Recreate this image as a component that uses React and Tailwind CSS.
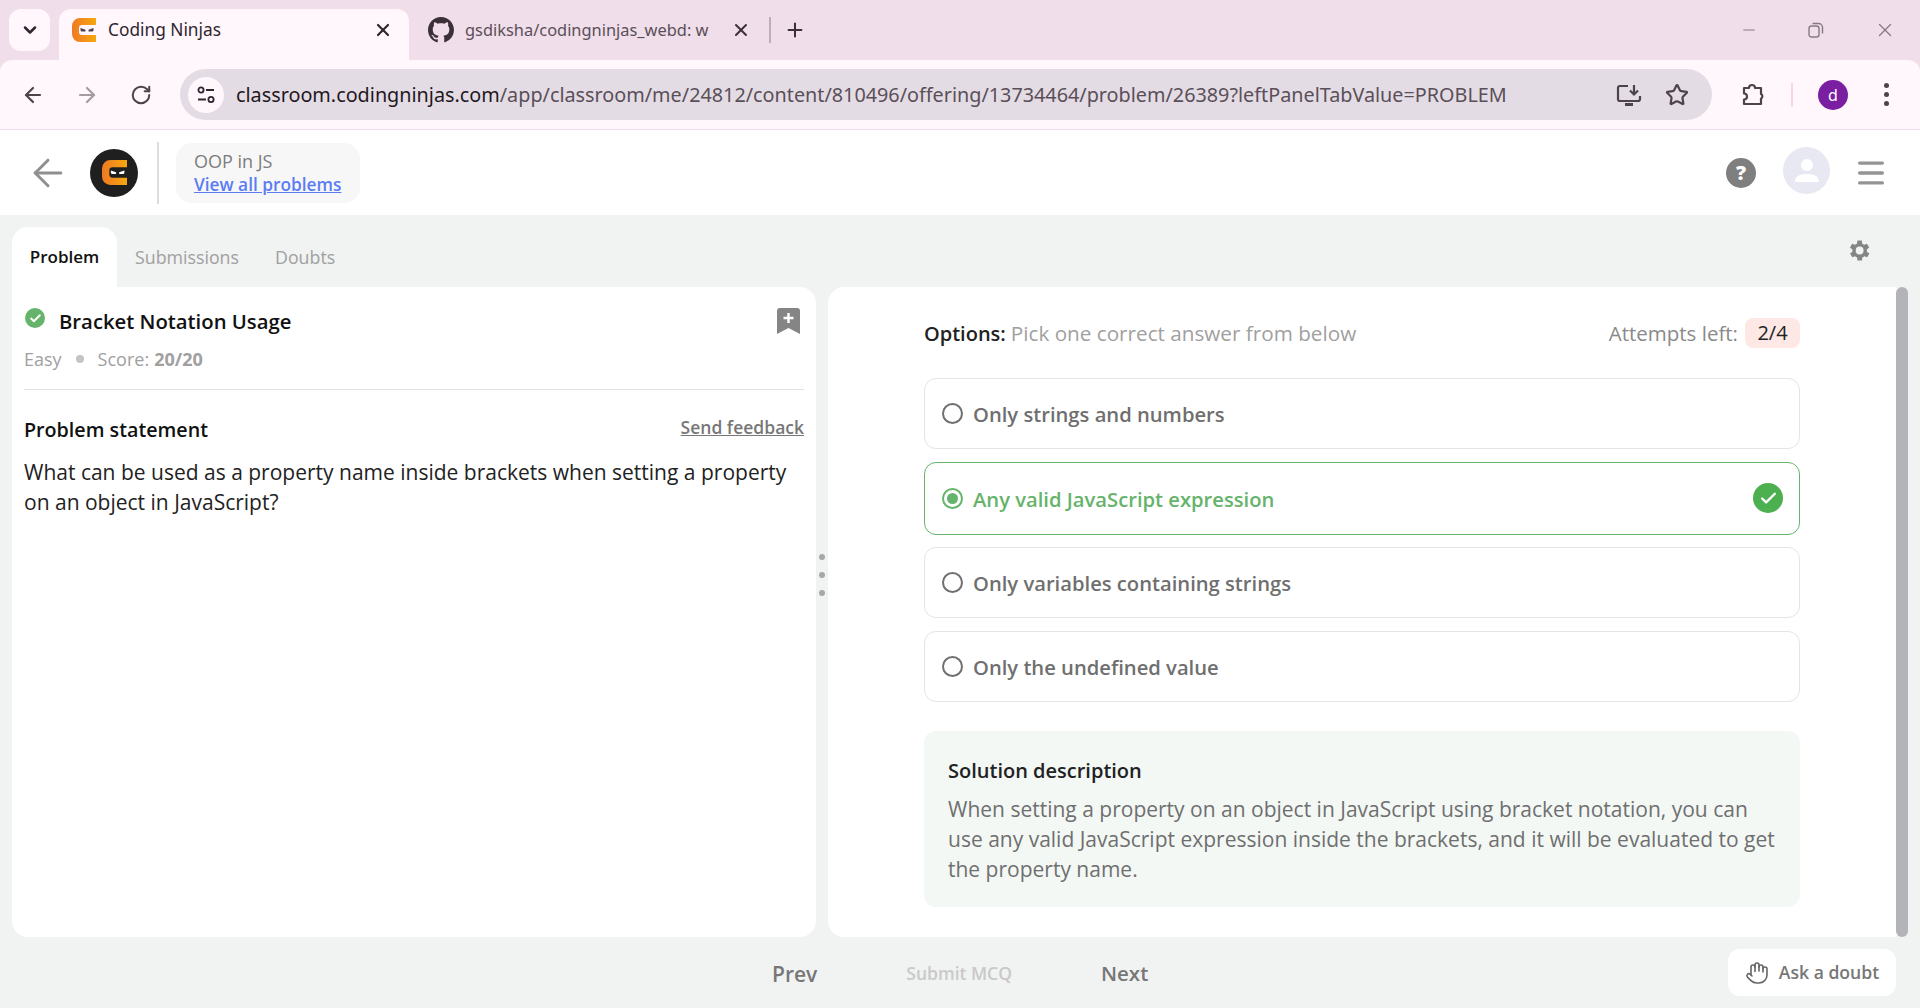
import React from 'react';
import { ArrowLeft, ArrowRight, RotateCw, ChevronDown, X, Plus, Minus, Star, Menu, Check, Hand } from 'lucide-react';

const bodyFont = 'font-["Open_Sans",sans-serif]';
const chromeFont = 'font-["Noto_Sans",sans-serif]';

// Orange "C" with the little ninja eyes, used for favicon and header logo
function NinjaMark({ size = 24, eyes = '#fff' }) {
  return (
    <svg width={size} height={size} viewBox="0 0 24 24">
      <defs>
        <linearGradient id="cnGrad" x1="0" x2="1" y1="0" y2="0">
          <stop offset="0" stopColor="#ee7a25" />
          <stop offset="1" stopColor="#f7a70e" />
        </linearGradient>
      </defs>
      <path d="M8 0h16v7H10a3 3 0 0 0-3 3v4a3 3 0 0 0 3 3h14v7H8a8 8 0 0 1-8-8V8a8 8 0 0 1 8-8z" fill="url(#cnGrad)" />
      <path d="M8.5 10l5 1.8v1.6H10a1.5 1.5 0 0 1-1.5-1.5zM21.5 10l-5 1.8v1.6H20a1.5 1.5 0 0 0 1.5-1.5z" fill={eyes} />
    </svg>
  );
}

function GithubMark() {
  return (
    <svg width="26" height="26" viewBox="0 0 16 16" fill="#3b3038">
      <path d="M8 0C3.58 0 0 3.58 0 8c0 3.54 2.29 6.53 5.47 7.59.4.07.55-.17.55-.38 0-.19-.01-.82-.01-1.49-2.01.37-2.53-.49-2.69-.94-.09-.23-.48-.94-.82-1.13-.28-.15-.68-.52-.01-.53.63-.01 1.08.58 1.23.82.72 1.21 1.87.87 2.33.66.07-.52.28-.87.51-1.07-1.78-.2-3.64-.89-3.64-3.95 0-.87.31-1.59.82-2.15-.08-.2-.36-1.02.08-2.12 0 0 .67-.21 2.2.82.64-.18 1.32-.27 2-.27s1.36.09 2 .27c1.53-1.04 2.2-.82 2.2-.82.44 1.1.16 1.92.08 2.12.51.56.82 1.27.82 2.15 0 3.07-1.87 3.75-3.65 3.95.29.25.54.73.54 1.48 0 1.07-.01 1.93-.01 2.2 0 .21.15.46.55.38A8.01 8.01 0 0 0 16 8c0-4.42-3.58-8-8-8z" />
    </svg>
  );
}

function BrowserTabs() {
  return (
    <div className={`flex h-[60px] ${chromeFont}`}>
      <div className="ml-[9px] mt-[9px] flex h-[42px] w-[41px] items-center justify-center rounded-xl bg-[#fff7fb]">
        <ChevronDown size={20} strokeWidth={3} className="text-[#2f2530]" />
      </div>
      <div className="ml-[9px] mt-[9px] flex h-[51px] w-[350px] items-center rounded-t-xl bg-[#fff7fb] pb-[9px] pl-[13px] pr-[16px]">
        <NinjaMark size={24} eyes="#4e434c" />
        <span className="ml-[12px] flex-1 text-[17.300px] text-[#2f2530]">Coding Ninjas</span>
        <X size={20} strokeWidth={2.6} className="text-[#2f2530]" />
      </div>
      <div className="mt-[9px] flex h-[42px] w-[372px] items-center pl-[19px]">
        <GithubMark />
        <span className="ml-[11px] w-[250px] overflow-hidden whitespace-nowrap text-[16.400px] text-[#5a4f58]">gsdiksha/codingninjas_webd: w</span>
        <X size={20} strokeWidth={2.4} className="ml-[16px] text-[#3b3038]" />
        <div className="ml-[18px] h-[26px] w-[2px] bg-[#bdafb9]" />
      </div>
      <div className="mt-[9px] flex h-[42px] items-center pl-[3px]">
        <Plus size={22} strokeWidth={2.2} className="text-[#3b3038]" />
      </div>
      <div className="mt-[9px] ml-auto flex h-[42px] items-center gap-[50px] pr-[24px] text-[#857a82]">
        <Minus size={18} strokeWidth={1.6} />
        <svg width="16" height="16" viewBox="0 0 16 16" fill="none" stroke="currentColor" strokeWidth="1.4">
          <rect x="1" y="4" width="10" height="11" rx="2.5" />
          <path d="M4.5 1.5h6A4 4 0 0 1 14.5 5.5v6" />
        </svg>
        <X size={22} strokeWidth={1.4} />
      </div>
    </div>
  );
}

function BrowserToolbar() {
  return (
    <div className="flex h-[70px] items-center rounded-t-xl border-b border-[#f0deea] bg-[#fff7fb] pl-[21px] pr-[16px]">
      <ArrowLeft size={24} strokeWidth={2.2} className="text-[#4e434c]" />
      <ArrowRight size={24} strokeWidth={2.2} className="ml-[30px] text-[#a59ba3]" />
      <RotateCw size={22} strokeWidth={2.2} className="ml-[31px] text-[#4e434c]" />
      <div className={`ml-[28px] flex h-[51px] w-[1532px] items-center rounded-full bg-[#e4dce4] pl-[8px] pr-[23px] ${chromeFont}`}>
        <div className="flex h-[36px] w-[36px] items-center justify-center rounded-full bg-[#fff7fb]">
          <svg width="20" height="20" viewBox="0 0 20 20" fill="none" stroke="#2f2530" strokeWidth="1.8">
            <circle cx="5" cy="5" r="2.6" />
            <path d="M10 5h8M2 14.5h8" />
            <circle cx="15" cy="14.5" r="2.6" />
          </svg>
        </div>
        <div className="ml-[12px] flex-1 whitespace-nowrap text-[19.800px] text-[#5a4f58]">
          <span className="text-[#1f1820]">classroom.codingninjas.com</span>/app/classroom/me/24812/content/810496/offering/13734464/problem/26389?leftPanelTabValue=PROBLEM
        </div>
        <svg width="26" height="24" viewBox="0 0 26 24" fill="none" stroke="#4e434c" strokeWidth="2.2">
          <path d="M12 3H4a2 2 0 0 0-2 2v11a2 2 0 0 0 2 2h18a2 2 0 0 0 2-2v-3" />
          <path d="M18 2v9M14 7.5l4 4 4-4" />
          <path d="M9 21.5h8" strokeWidth="3" />
        </svg>
        <Star size={24} strokeWidth={2.2} className="ml-[23px] text-[#4e434c]" />
      </div>
      <svg className="ml-[29px]" width="24" height="24" viewBox="0 0 24 24" fill="none" stroke="#4e434c" strokeWidth="2.2">
        <path d="M3 5h5a3 3 0 0 1 6 0h6v6a2.6 2.6 0 0 1 0 4.6V21H3v-4.5a3 3 0 0 0 0-6z" strokeLinejoin="round" />
      </svg>
      <div className="ml-[26px] h-[24px] w-[2px] bg-[#f8d3ee]" />
      <div className={`ml-[25px] flex h-[30px] w-[30px] items-center justify-center rounded-full bg-[#7b1fa2] text-[16px] text-white ${chromeFont}`}>d</div>
      <div className="ml-[36px] flex flex-col gap-[4px]">
        <span className="h-[5px] w-[5px] rounded-full bg-[#4e434c]" />
        <span className="h-[5px] w-[5px] rounded-full bg-[#4e434c]" />
        <span className="h-[5px] w-[5px] rounded-full bg-[#4e434c]" />
      </div>
    </div>
  );
}

function AppHeader() {
  return (
    <header className="flex h-[85px] items-center bg-white pl-[26px] pr-[32px]">
      <ArrowLeft size={44} strokeWidth={1.6} className="text-[#8f8f8f]" />
      <div className="ml-[20px] flex h-[48px] w-[48px] items-center justify-center rounded-full bg-[#1f1f1f]">
        <NinjaMark size={25} />
      </div>
      <div className="ml-[19px] h-[62px] w-[2px] bg-[#dddddd]" />
      <div className="ml-[17px] flex h-[60px] w-[184px] flex-col justify-center rounded-2xl bg-[#f7f7f7] pl-[18px]">
        <div className="text-[18px] leading-[24px] text-[#7c7c7c]">OOP in JS</div>
        <a className="text-[17.300px] font-semibold leading-[24px] text-[#5b7cf5] underline">View all problems</a>
      </div>
      <div className="ml-auto flex h-[30px] w-[30px] items-center justify-center rounded-full bg-[#7f7f7f] text-[20px] font-extrabold text-white">?</div>
      <div className="ml-[27px] -mt-[5px] flex h-[47px] w-[47px] items-center justify-center rounded-full bg-[#e8e8f2]">
        <svg width="26" height="26" viewBox="0 0 26 26" fill="#fff">
          <circle cx="13" cy="8" r="6" />
          <path d="M1 25c0-6 5-8 12-8s12 2 12 8z" />
        </svg>
      </div>
      <Menu size={34} strokeWidth={2.4} className="ml-[24px] text-[#949494]" />
    </header>
  );
}

function TabRow() {
  return (
    <div className="flex h-[72px] items-end pl-[12px] pr-[48px] pt-[12px]">
      <div className="flex h-[60px] w-[105px] items-center justify-center rounded-t-2xl bg-white text-[17px] font-semibold text-[#111]">Problem</div>
      <div className="ml-[18px] flex h-[60px] items-center text-[17.800px] text-[#a0a0a0]">Submissions</div>
      <div className="ml-[36px] flex h-[60px] items-center text-[17.800px] text-[#a0a0a0]">Doubts</div>
      <svg className="ml-auto mb-[23px]" width="27" height="27" viewBox="0 0 24 24" fill="#858585">
        <path d="M19.4 13a7.6 7.6 0 0 0 0-2l2.100-1.600-2-3.500-2.500 1a7.6 7.6 0 0 0-1.700-1L15 3.200h-4l-.4 2.700a7.6 7.6 0 0 0-1.700 1l-2.500-1-2 3.500L6.600 11a7.6 7.6 0 0 0 0 2l-2.100 1.600 2 3.500 2.500-1a7.6 7.600 0 0 0 1.700 1l.4 2.700h4l.4-2.700a7.600 7.600 0 0 0 1.700-1l2.500 1 2-3.500zM13 15.500a3.500 3.500 0 1 1 0-7 3.500 3.500 0 0 1 0 7z" />
      </svg>
    </div>
  );
}

function ProblemPanel() {
  return (
    <section className="flex h-[650px] w-[804px] flex-col rounded-b-2xl rounded-tr-2xl bg-white px-[12px] pt-[19px]">
      <div className="flex items-start">
        <div className="ml-[1px] mt-[2px] flex h-[20px] w-[20px] items-center justify-center rounded-full bg-[#66b36b]">
          <Check size={13} strokeWidth={3.5} className="text-white" />
        </div>
        <h1 className="ml-[14px] text-[20.300px] font-semibold leading-[30px] text-[#111]">Bracket Notation Usage</h1>
        <svg className="ml-auto mr-[4px] mt-[2px]" width="23" height="26" viewBox="0 0 23 26">
          <path d="M3 0h17a3 3 0 0 1 3 3v23l-11.500-6L0 26V3a3 3 0 0 1 3-3z" fill="#858585" />
          <path d="M11.500 5v10M6.500 10h10" stroke="#fff" strokeWidth="2.4" />
        </svg>
      </div>
      <div className="mt-[7px] flex items-center text-[18px] leading-[32px] text-[#a0a0a0]">
        <span>Easy</span>
        <span className="ml-[14px] h-[8px] w-[8px] rounded-full bg-[#c4c4c4]" />
        <span className="ml-[14px]">Score:</span>
        <span className="ml-[5px] font-bold">20/20</span>
      </div>
      <div className="mt-[14px] h-px bg-[#e2e2e2]" />
      <div className="mt-[26px] flex items-center justify-between">
        <h2 className="text-[19.700px] font-semibold leading-[28px] text-[#111]">Problem statement</h2>
        <a className="-mt-[6px] text-[17.500px] font-semibold text-[#777] underline">Send feedback</a>
      </div>
      <p className="mt-[13px] text-[21px] leading-[30px] text-[#222]">
        What can be used as a property name inside brackets when setting a property on an object in JavaScript?
      </p>
    </section>
  );
}

function OptionRow({ label, selected }) {
  const boxClass = selected ? 'h-[73px] border-[#66b36b]' : 'h-[71px] border-[#e4e4e4]';
  return (
    <div className={`flex items-center rounded-xl border bg-white pl-[17px] pr-[16px] ${boxClass}`}>
      {selected ? (
        <span className="flex h-[21px] w-[21px] items-center justify-center rounded-full border-2 border-[#66b36b]">
          <span className="h-[11px] w-[11px] rounded-full bg-[#66b36b]" />
        </span>
      ) : (
        <span className="h-[21px] w-[21px] rounded-full border-2 border-[#6f6f6f]" />
      )}
      <span className={`ml-[10px] flex-1 pt-[2px] text-[20.200px] font-semibold ${selected ? 'text-[#66b36b]' : 'text-[#6f6f6f]'}`}>{label}</span>
      {selected && (
        <span className="flex h-[30px] w-[30px] items-center justify-center rounded-full bg-[#4caf50]">
          <Check size={19} strokeWidth={3} className="text-white" />
        </span>
      )}
    </div>
  );
}

function AnswerPanel() {
  return (
    <section className="flex h-[650px] flex-1 rounded-2xl bg-white">
      <div className="flex flex-1 flex-col pl-[96px] pr-[96px] pt-[30px]">
        <div className="flex h-[34px] items-center">
          <span className="text-[20px] font-semibold text-[#222]">Options:</span>
          <span className="ml-[5px] text-[20.700px] text-[#a0a0a0]">Pick one correct answer from below</span>
          <span className="ml-auto -mt-[1px] text-[20.500px] text-[#8a8a8a]">Attempts left:</span>
          <span className="ml-[7px] -mt-[2px] flex h-[30px] w-[55px] items-center justify-center rounded-lg bg-[#fde8e5] text-[20px] text-[#222]">2/4</span>
        </div>
        <div className="mt-[27px] flex flex-col gap-[12.500px]">
          <OptionRow label="Only strings and numbers" />
          <OptionRow label="Any valid JavaScript expression" selected />
          <OptionRow label="Only variables containing strings" />
          <OptionRow label="Only the undefined value" />
        </div>
        <div className="mt-[29.500px] h-[176px] rounded-xl bg-[#f3f8f5] pl-[24px] pr-[20px] pt-[26px]">
          <h3 className="text-[20px] font-semibold leading-[28px] text-[#222]">Solution description</h3>
          <p className="mt-[9px] text-[21px] leading-[30px] text-[#6f6f6f]">
            When setting a property on an object in JavaScript using bracket notation, you can use any valid JavaScript expression inside the brackets, and it will be evaluated to get the property name.
          </p>
        </div>
      </div>
      <div className="h-full w-[12px] rounded-full bg-[#b3b4b8]" />
    </section>
  );
}

function FooterBar() {
  return (
    <footer className="flex h-[71px] items-center pr-[24px]">
      <div className="ml-[772px] mt-[4px] text-[21px] font-semibold text-[#777]">Prev</div>
      <div className="ml-[89px] mt-[2px] text-[17.500px] font-semibold text-[#c9c9c9]">Submit MCQ</div>
      <div className="ml-[89px] mt-[2px] text-[20.500px] font-semibold text-[#777]">Next</div>
      <div className="ml-auto flex h-[47px] w-[168px] items-center justify-center gap-[10px] rounded-xl bg-white text-[17.600px] font-semibold text-[#777]">
        <Hand size={24} strokeWidth={1.6} className="text-[#666]" />
        Ask a doubt
      </div>
    </footer>
  );
}

export default function App() {
  return (
    <div className={`flex h-[1008px] w-[1920px] flex-col overflow-hidden bg-[#f1f2f2] ${bodyFont}`}>
      <div className="bg-[#f0deea]">
        <BrowserTabs />
        <BrowserToolbar />
      </div>
      <AppHeader />
      <TabRow />
      <div className="flex pl-[12px] pr-[12px]">
        <ProblemPanel />
        {/* drag handle between the two panels */}
        <div className="flex h-[650px] w-[12px] flex-col items-center justify-center gap-[12px] pb-[74px]">
          <span className="h-[6px] w-[6px] rounded-full bg-[#a8a8a8]" />
          <span className="h-[6px] w-[6px] rounded-full bg-[#a8a8a8]" />
          <span className="h-[6px] w-[6px] rounded-full bg-[#a8a8a8]" />
        </div>
        <AnswerPanel />
      </div>
      <FooterBar />
    </div>
  );
}
